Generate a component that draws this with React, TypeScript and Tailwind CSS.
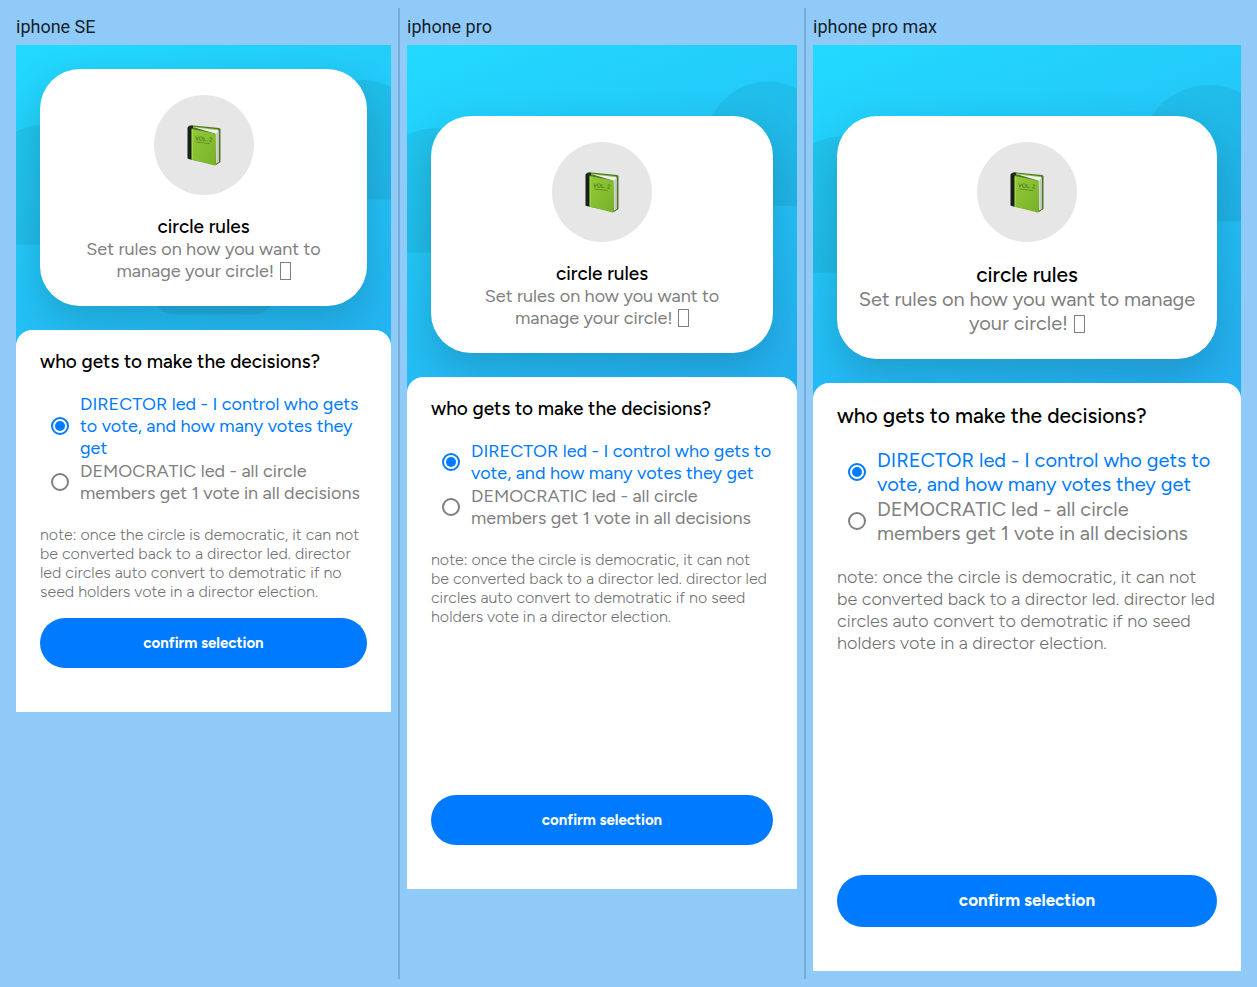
import { useState } from "react";
import clsx from "clsx";

type Device = {
  id: string;
  name: string;
  frame: string;
  notch: boolean;
  large: boolean;
};

const devices: Device[] = [
  { id: "se", name: "iphone SE", frame: "min-h-[667px]", notch: false, large: false },
  { id: "pro", name: "iphone pro", frame: "min-h-[844px]", notch: true, large: false },
  { id: "max", name: "iphone pro max", frame: "min-h-[926px]", notch: true, large: true },
];

function Book() {
  return (
    <svg viewBox="0 0 34 41" className="h-[41px] w-[34px]" aria-hidden="true">
      <defs>
        <linearGradient id="cover" x1="0" y1="0" x2="1" y2="1">
          <stop offset="0" stopColor="#92cb36" />
          <stop offset="1" stopColor="#78b129" />
        </linearGradient>
      </defs>
      <path d="M1 2.500 Q1.500 0.200 4 0.200 L32 3 Q33.500 3.300 33.500 4.500 L33.500 37 L29 40 L1 34 Z" fill="#4d7428" />
      <path d="M4.500 1.200 L31.500 4.200 L31 5.500 L5 2.500 Z" fill="#8cc43c" />
      <path d="M7 2.200 L31.500 5.200 L31.500 37 L29 38.500 L28 8.500 Z" fill="#f1f3ee" />
      <path d="M29.300 8.500 L31.800 5.500 V36.500 L29.300 38.500 Z" fill="#c3c9bf" />
      <path d="M0.500 3 Q0.500 1.500 2 1.500 L5 4 L5 34.500 L0.500 33.500 Z" fill="#17201a" />
      <path d="M1 2.500 Q2 0.200 6 0.800 L6 3.200 Z" fill="#1b2b1d" />
      <path d="M4.500 4 L28 8.500 Q28.800 8.700 28.800 9.500 L28.800 39.500 Q28.700 40.800 27.500 40.500 L4.500 34.500 Z" fill="url(#cover)" />
      <path d="M5.300 4.300 V34.500" stroke="#b0e052" strokeWidth="0.800" />
      <text x="8" y="15" fontSize="5.500" fontFamily="Liberation Sans" fill="#34580f" transform="rotate(5 8 15)">
        VOL. 2
      </text>
      <path d="M9 17 L23 18.600" stroke="#5b8820" strokeWidth="0.800" />
    </svg>
  );
}

function Clouds() {
  return (
    <svg viewBox="0 0 375 300" className="absolute inset-x-0 top-0 w-full" aria-hidden="true">
      <g fill="#000000" fillOpacity="0.060">
        <path d="M-33 199.500 V140 A60 60 0 0 1 87 140 V199.500 Z" />
        <path d="M287 154.500 V95 A60 60 0 0 1 407 95 V154.500 Z" />
        <rect x="138" y="150" width="120" height="119.500" rx="20" />
      </g>
    </svg>
  );
}

function Option({
  group,
  label,
  checked,
  onSelect,
}: {
  group: string;
  label: string;
  checked: boolean;
  onSelect: () => void;
}) {
  return (
    <label className={clsx("flex cursor-pointer items-center gap-[11px] pl-[11px]", checked ? "text-[#007bff]" : "text-[#808080]")}>
      <input
        type="radio"
        name={group}
        checked={checked}
        onChange={onSelect}
        className="grid size-[18px] shrink-0 appearance-none place-items-center rounded-full border-2 border-current before:size-[10px] before:rounded-full before:bg-current before:opacity-0 checked:before:opacity-100"
      />
      <span>{label}</span>
    </label>
  );
}

function Phone({ device }: { device: Device }) {
  const [choice, setChoice] = useState("director");
  const { large } = device;
  const heading = large ? "text-[21px] leading-[25px]" : "text-[19px] leading-[23px]";
  const body = large ? "text-[20px] leading-[24px]" : "text-[18px] leading-[22px]";
  const note = large ? "text-[18px] leading-[22px]" : "pr-1 text-[16px] leading-[19px]";
  const action = large ? "h-[52px] text-[17px]" : "h-[50px] text-[15px]";

  return (
    <section className="min-w-0">
      <h2 className="flex h-[37px] items-center font-[Roboto,sans-serif] text-[18px] text-black/87">{device.name}</h2>
      <div
        className={clsx(
          "relative flex flex-col overflow-hidden bg-linear-[160deg,#22daff_0px,#24b0f0_440px] font-[Figtree,Lato,sans-serif]",
          device.frame,
        )}
      >
        <Clouds />
        <div className={clsx("relative px-6 pb-6", device.notch ? "pt-[71px]" : "pt-6")}>
          <div className="flex flex-col items-center rounded-[40px] bg-white px-5 pt-[26px] pb-6 text-center shadow-[0_15px_40px_rgba(0,0,0,0.17)]">
            <div className="mb-5 grid size-[100px] place-items-center rounded-full bg-[#e6e6e6]">
              <Book />
            </div>
            <h3 className={clsx("font-medium text-black", heading)}>circle rules</h3>
            <p className={clsx("text-[#808080]", body, !large && "max-w-[250px]")}>
              Set rules on how you want to manage your circle!{" "}
              <span className="ml-px inline-block h-[18px] w-[11px] border border-current align-[-3px]" aria-hidden="true" />
            </p>
          </div>
        </div>
        <form
          className="relative flex grow flex-col rounded-t-2xl bg-white px-6 pt-5 pb-11"
          onSubmit={(event) => event.preventDefault()}
        >
          <h3 className={clsx("font-medium text-black", heading)}>who gets to make the decisions?</h3>
          <div role="radiogroup" aria-label="who gets to make the decisions?" className={clsx("mt-5 flex flex-col gap-px", body)}>
            <Option
              group={device.id}
              label="DIRECTOR led - I control who gets to vote, and how many votes they get"
              checked={choice === "director"}
              onSelect={() => setChoice("director")}
            />
            <Option
              group={device.id}
              label="DEMOCRATIC led - all circle members get 1 vote in all decisions"
              checked={choice === "democratic"}
              onSelect={() => setChoice("democratic")}
            />
          </div>
          <p className={clsx("mt-[21px] mb-4 font-light text-[#707070]", note)}>
            note: once the circle is democratic, it can not be converted back to a director led. director led circles auto
            convert to demotratic if no seed holders vote in a director election.
          </p>
          <button type="submit" className={clsx("mt-auto w-full rounded-full bg-[#007bff] font-bold text-white", action)}>
            confirm selection
          </button>
        </form>
      </div>
    </section>
  );
}

export default function App() {
  return (
    <main className="grid min-h-screen grid-cols-[375fr_2px_390fr_2px_428fr] gap-x-[7px] bg-[#90caf9] px-4 py-2">
      <Phone device={devices[0]} />
      <div className="bg-[#79add9]" />
      <Phone device={devices[1]} />
      <div className="bg-[#79add9]" />
      <Phone device={devices[2]} />
    </main>
  );
}
